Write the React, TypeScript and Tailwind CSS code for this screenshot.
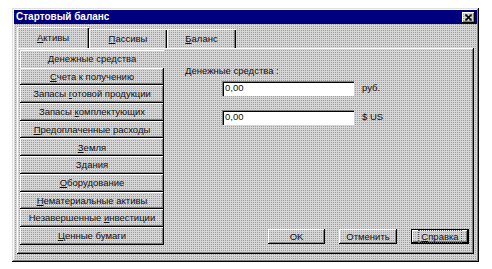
import React from 'react'

const dither = "bg-[conic-gradient(#9c9c9c_0_25%,#d6d6d6_0)] bg-[length:2px_2px]"
const raised = "shadow-[inset_-1px_-1px_#000,inset_1px_1px_#fff,inset_-2px_-2px_#808080]"
const sunken = "shadow-[inset_1px_1px_#808080,inset_2px_2px_#000,inset_-1px_-1px_#fff]"

function U({ children }: { children: React.ReactNode }) {
  return <span className="underline underline-offset-1">{children}</span>
}

const items: React.ReactNode[] = [
  <><U>Д</U>енежные средства</>,
  <><U>С</U>чета к получению</>,
  <>Запасы <U>г</U>отовой продукции</>,
  <>Запасы <U>к</U>омплектующих</>,
  <><U>П</U>редоплаченные расходы</>,
  <><U>З</U>емля</>,
  <>З<U>д</U>ания</>,
  <><U>О</U>борудование</>,
  <><U>Н</U>ематериальные активы</>,
  <>Незавершенные <U>и</U>нвестиции</>,
  <><U>Ц</U>енные бумаги</>,
]

export default function App() {
  return (
    <div className="w-[492px] h-[269px] bg-white pt-[8px] pl-[12px] font-['Liberation_Sans',Arial,sans-serif] text-[9.5px] text-[#111] leading-none">
      <div className={`w-[467px] h-[254px] flex flex-col p-[2px] ${dither} shadow-[inset_-1px_-1px_#000,inset_1px_1px_#dfdfdf,inset_-2px_-2px_#808080,inset_2px_2px_#fff]`}>
        {/* Title bar */}
        <div className="h-[14px] flex items-center justify-between bg-[#00007e] pl-[2px] pr-[2px]">
          <span className="text-white font-bold text-[10px]">Стартовый баланс</span>
          <div className={`w-[13px] h-[11px] flex items-center justify-center ${dither} ${raised}`}>
            <svg width="7" height="7" viewBox="0 0 7 7">
              <path d="M0.5 0.5L6.5 6.5M6.5 0.5L0.5 6.5" stroke="#000" strokeWidth="1.6" />
            </svg>
          </div>
        </div>

        {/* Body */}
        <div className="flex-1 flex flex-col px-[3px] pt-[3px] pb-[6px]">
          {/* Tabs */}
          <div className="flex h-[21px] items-end">
            <div className="w-[72px] h-[21px] flex items-center justify-center shadow-[inset_1px_1px_#fff,inset_-1px_0_#000,inset_-2px_0_#808080]">
              <span><U>А</U>ктивы</span>
            </div>
            <div className="w-[78px] h-[19px] flex items-center justify-center shadow-[inset_1px_1px_#fff,inset_-1px_0_#000,inset_-2px_0_#808080]">
              <span><U>П</U>ассивы</span>
            </div>
            <div className="w-[69px] h-[19px] flex items-center justify-center shadow-[inset_1px_1px_#fff,inset_-1px_0_#000,inset_-2px_0_#808080]">
              <span><U>Б</U>аланс</span>
            </div>
          </div>

          {/* Panel */}
          <div className={`flex-1 flex p-[2px] ${raised}`}>
            <div className="w-[145px] flex flex-col pl-[1px]">
              {items.map((it, i) => (
                <div
                  key={i}
                  className={`h-[17.7px] flex items-center justify-center ${i === 0 ? 'shadow-[inset_1px_1px_#fff]' : raised}`}
                >
                  <span>{it}</span>
                </div>
              ))}
            </div>

            <div className="flex-1 flex flex-col pl-[21px] pr-[3px] pb-[8px]">
              <div className="mt-[16px]">Денежные средства :</div>
              <div className="flex items-center mt-[5px]">
                <div className={`ml-[37px] w-[132px] h-[15px] bg-white flex items-center pl-[3px] ${sunken}`}>0,00</div>
                <span className="ml-[8px]">руб.</span>
              </div>
              <div className="flex items-center mt-[14px]">
                <div className={`ml-[37px] w-[132px] h-[15px] bg-white flex items-center pl-[3px] ${sunken}`}>0,00</div>
                <span className="ml-[8px]">$ US</span>
              </div>

              <div className="mt-auto flex justify-end gap-[14px]">
                <div className={`w-[57px] h-[15px] flex items-center justify-center ${raised}`}>OK</div>
                <div className={`w-[58px] h-[15px] flex items-center justify-center ${raised}`}>Отменить</div>
                <div className={`w-[58px] h-[15px] flex items-center justify-center shadow-[inset_0_0_0_1px_#000,inset_-2px_-2px_#000,inset_2px_2px_#fff,inset_-3px_-3px_#808080]`}>
                  <span className="outline outline-1 outline-dotted outline-[#555] px-[2px] py-[1px]"><U>С</U>правка</span>
                </div>
              </div>
            </div>
          </div>
        </div>
      </div>
    </div>
  )
}
